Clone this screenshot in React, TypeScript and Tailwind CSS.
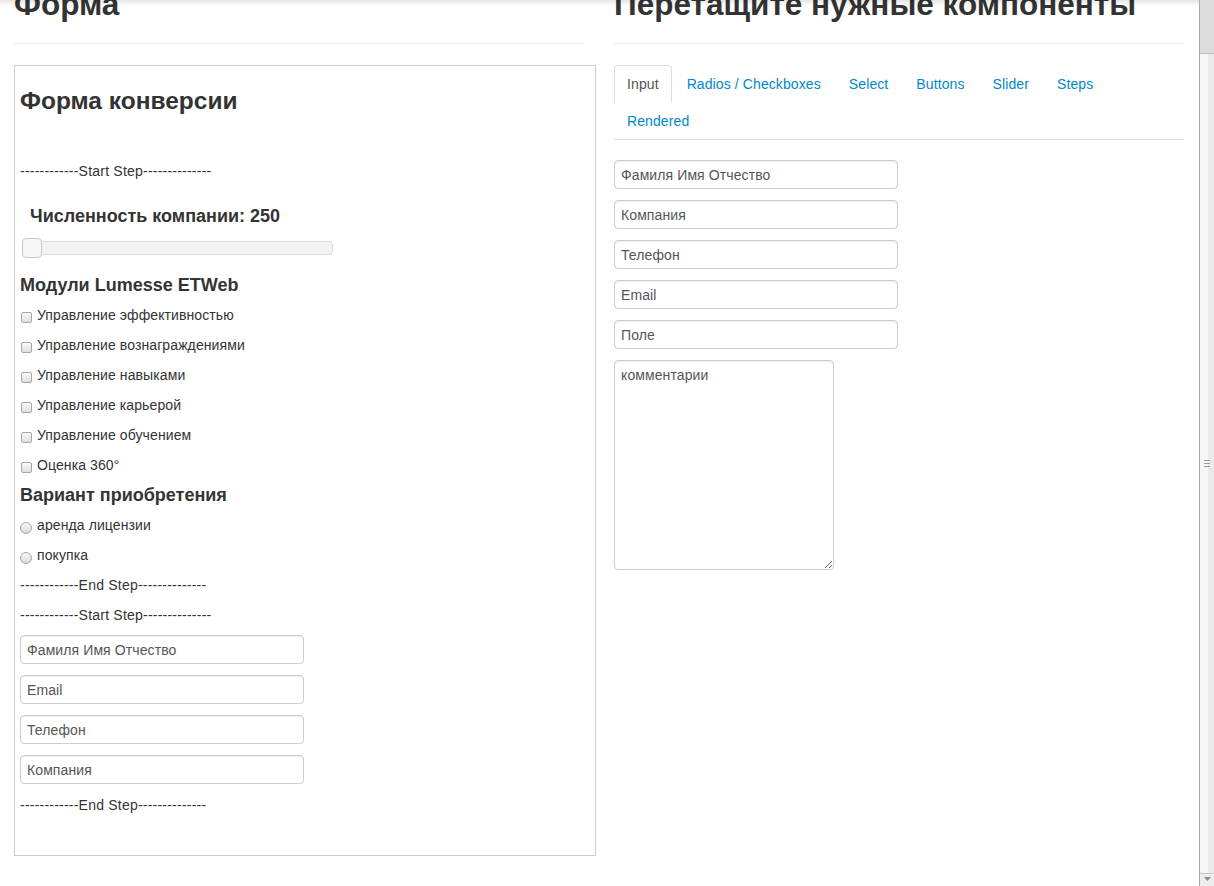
import type { ReactNode } from 'react';

const modules = [
  'Управление эффективностью',
  'Управление вознаграждениями',
  'Управление навыками',
  'Управление карьерой',
  'Управление обучением',
  'Оценка 360°',
];

const tabs = ['Input', 'Radios / Checkboxes', 'Select', 'Buttons', 'Slider', 'Steps', 'Rendered'];

function Row({ children, className = '' }: { children: ReactNode; className?: string }) {
  return <div className={`flex h-[30px] items-center ${className}`}>{children}</div>;
}

function StepMark({ label }: { label: string }) {
  return <Row className="tracking-[0.22px]">{`------------${label}--------------`}</Row>;
}

function TextInput({ value }: { value: string }) {
  return (
    <input
      readOnly
      value={value}
      className="block h-[29px] w-[284px] rounded-[4px] border border-[#ccc] bg-white px-[6px] text-[14px] text-[#555] shadow-[inset_0_1px_1px_rgba(0,0,0,0.075)] outline-none"
    />
  );
}

function PageHeader({ title }: { title: string }) {
  return (
    <h1 className="-mt-[16px] border-b border-[#eee] pb-[19px] text-[31.5px] font-bold leading-[40px] tracking-normal whitespace-nowrap">
      {title}
    </h1>
  );
}

function Scrollbar() {
  return (
    <aside className="flex h-screen w-[15px] shrink-0 flex-col border-l border-[#a8a8a8] bg-[#ececec]">
      <div className="h-[54px] border-b border-[#bdbdbd] bg-[#dcdcdc]" />
      <div className="flex flex-1 items-center justify-center rounded-b-[2px] border-b border-[#c4c4c4] bg-linear-to-r from-[#f6f5f3] from-60% to-[#eaeaea] to-60%">
        <div className="flex flex-col gap-[2px]">
          <span className="block h-px w-[6px] bg-[#9a9a9a]" />
          <span className="block h-px w-[6px] bg-[#9a9a9a]" />
          <span className="block h-px w-[6px] bg-[#9a9a9a]" />
        </div>
      </div>
      <div className="flex h-[12px] items-start justify-center pt-[3px]">
        <svg width="7" height="5" viewBox="0 0 7 5">
          <path d="M0 0h7L3.5 4z" fill="#8a8a8a" />
        </svg>
      </div>
    </aside>
  );
}

export default function App() {
  return (
    <div className="flex h-screen overflow-hidden bg-white font-['Liberation_Sans',Arial,sans-serif] text-[14px] leading-5 tracking-[0.1px] text-[#333]">
      <div className="relative flex-1 overflow-hidden">
        <div className="pointer-events-none absolute inset-x-0 top-0 h-[6px] bg-linear-to-b from-black/10 to-transparent" />
        <div className="flex gap-[30px] px-[14px]">
          {/* form preview */}
          <section className="w-[570px] shrink-0">
            <PageHeader title="Форма" />
            <div className="mt-[21px] w-[582px] border border-[#ccc] px-[5px] pb-[35px]">
              <h3 className="mt-[15px] text-[24.5px] font-bold leading-[40px] tracking-normal">Форма конверсии</h3>
              <div className="mt-[35px]">
                <StepMark label="Start Step" />
              </div>
              <Row className="mt-[15px] pl-[10px] text-[18px] font-bold tracking-normal">Численность компании: 250</Row>
              <div className="relative mt-[10px] ml-[2px] h-[14px] w-[311px] rounded-[4px] border border-[#ddd] bg-[#f3f3f3]">
                <span className="absolute -top-[4px] -left-px h-[20px] w-[20px] rounded-[4px] border border-[#c8c8c8] bg-[#f6f6f6]" />
              </div>
              <Row className="mt-[15px] text-[18px] font-bold tracking-normal">Модули Lumesse ETWeb</Row>
              {modules.map((m) => (
                <Row key={m}>
                  <span className="mt-[5px] ml-px h-[11px] w-[11px] rounded-[2px] border border-[#a6a6a6] bg-linear-to-b from-[#fafafa] to-[#dedede]" />
                  <span className="ml-[5px]">{m}</span>
                </Row>
              ))}
              <Row className="text-[18px] font-bold tracking-normal">Вариант приобретения</Row>
              {['аренда лицензии', 'покупка'].map((r) => (
                <Row key={r}>
                  <span className="mt-[6px] h-[12px] w-[12px] rounded-full border border-[#a6a6a6] bg-linear-to-b from-[#fafafa] to-[#d8d8d8]" />
                  <span className="ml-[5px]">{r}</span>
                </Row>
              ))}
              <StepMark label="End Step" />
              <StepMark label="Start Step" />
              <div className="mt-[5px] flex flex-col gap-[11px]">
                <TextInput value="Фамиля Имя Отчество" />
                <TextInput value="Email" />
                <TextInput value="Телефон" />
                <TextInput value="Компания" />
              </div>
              <div className="mt-[6px]">
                <StepMark label="End Step" />
              </div>
            </div>
          </section>

          {/* components palette */}
          <section className="w-[570px] shrink-0">
            <PageHeader title="Перетащите нужные компоненты" />
            <ul className="mt-[21px] flex flex-wrap border-b border-[#ddd]">
              {tabs.map((t, i) => (
                <li key={t} className="-mb-px mr-[2px]">
                  <a
                    className={`block rounded-t-[4px] border px-[12px] py-[8px] leading-5 ${
                      i === 0 ? 'border-[#ddd] border-b-transparent bg-white text-[#555]' : 'border-transparent text-[#0088cc]'
                    }`}
                  >
                    {t}
                  </a>
                </li>
              ))}
            </ul>
            <div className="mt-[20px] flex flex-col gap-[11px]">
              <TextInput value="Фамиля Имя Отчество" />
              <TextInput value="Компания" />
              <TextInput value="Телефон" />
              <TextInput value="Email" />
              <TextInput value="Поле" />
              <textarea
                readOnly
                value="комментарии"
                className="block h-[210px] w-[220px] rounded-[4px] border border-[#ccc] bg-white px-[6px] py-[4px] text-[14px] leading-5 text-[#555] shadow-[inset_0_1px_1px_rgba(0,0,0,0.075)] outline-none"
              />
            </div>
          </section>
        </div>
      </div>
      <Scrollbar />
    </div>
  );
}
